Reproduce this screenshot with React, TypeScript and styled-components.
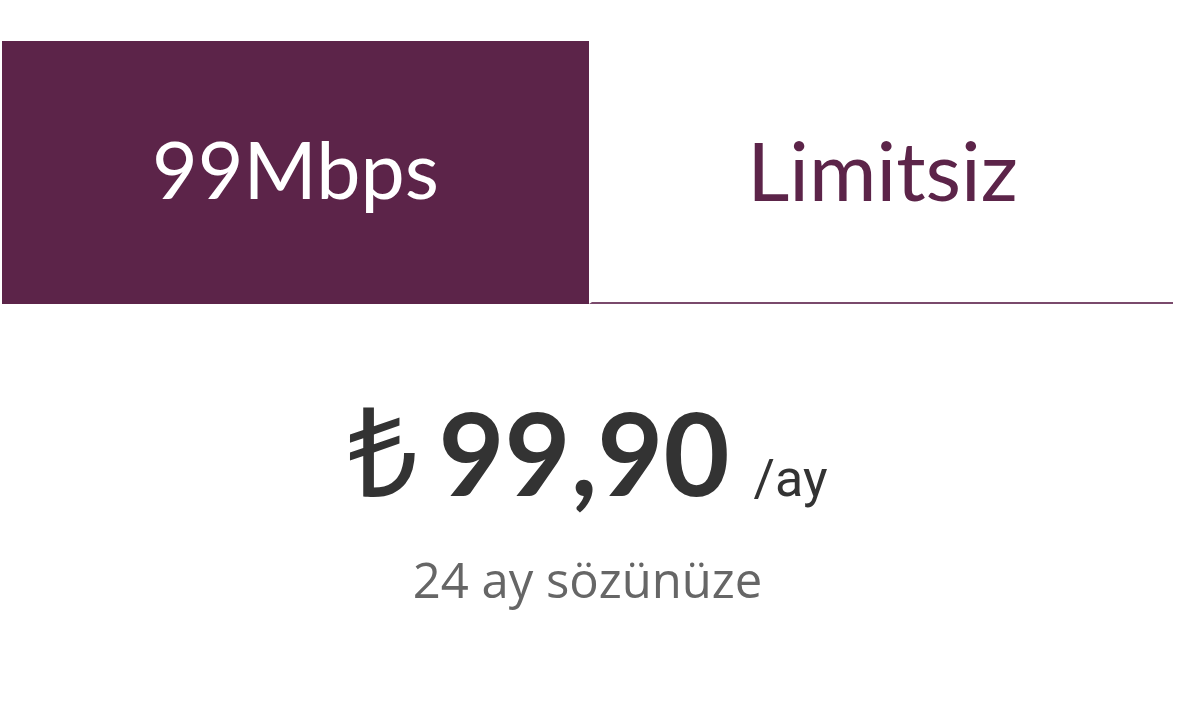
import React, { useState } from 'react';
import styled, { createGlobalStyle } from 'styled-components';

const GlobalStyle = createGlobalStyle`
  html, body {
    margin: 0;
    padding: 0;
    background: #ffffff;
  }
  body {
    font-family: Lato, 'Open Sans', sans-serif;
  }
`;

const PURPLE = '#5c2449';

const Wrapper = styled.div`
  width: 1171px;
  padding: 41px 0 0 2px;
`;

const TabRow = styled.div`
  display: grid;
  grid-template-columns: 587px 1fr;
  height: 263px;
`;

const Tab = styled.button<{ $active: boolean }>`
  display: flex;
  align-items: center;
  justify-content: center;
  border: none;
  margin: 0;
  padding: 0 0 6px 0;
  cursor: pointer;
  background: ${({ $active }) => ($active ? PURPLE : '#ffffff')};
  color: ${({ $active }) => ($active ? '#ffffff' : PURPLE)};
  border-left: ${({ $active }) => ($active ? 'none' : '3px solid #ffffff')};
  border-bottom: 2px solid ${({ $active }) => ($active ? PURPLE : '#7a4a6c')};
  font-family: Lato, 'Open Sans', sans-serif;
  font-size: ${({ $active }) => ($active ? '79px' : '82px')};
  font-weight: 400;
`;

const PriceBlock = styled.div`
  display: flex;
  flex-direction: column;
  align-items: center;
  padding-top: 82px;
`;

const PriceLine = styled.div`
  display: flex;
  align-items: baseline;
  color: #333333;
  line-height: 1;
`;

const Currency = styled.span`
  font-family: 'Noto Sans', 'DejaVu Sans', sans-serif;
  font-size: 124px;
  font-weight: 400;
  margin-right: 20px;
`;

const Amount = styled.span`
  font-family: Lato, sans-serif;
  font-size: 114px;
  font-weight: 700;
`;

const Period = styled.span`
  font-family: Roboto, sans-serif;
  font-size: 52px;
  font-weight: 400;
  margin-left: 24px;
`;

const Commitment = styled.div`
  margin-top: 36px;
  font-family: 'Open Sans', sans-serif;
  font-size: 49px;
  color: #666666;
`;

export default function App() {
  const [active, setActive] = useState(0);
  return (
    <>
      <GlobalStyle />
      <Wrapper>
        <TabRow>
          <Tab $active={active === 0} onClick={() => setActive(0)}>
            99Mbps
          </Tab>
          <Tab $active={active === 1} onClick={() => setActive(1)}>
            Limitsiz
          </Tab>
        </TabRow>
        <PriceBlock>
          <PriceLine>
            <Currency>₺</Currency>
            <Amount>99,90</Amount>
            <Period>/ay</Period>
          </PriceLine>
          <Commitment>24 ay sözünüze</Commitment>
        </PriceBlock>
      </Wrapper>
    </>
  );
}
